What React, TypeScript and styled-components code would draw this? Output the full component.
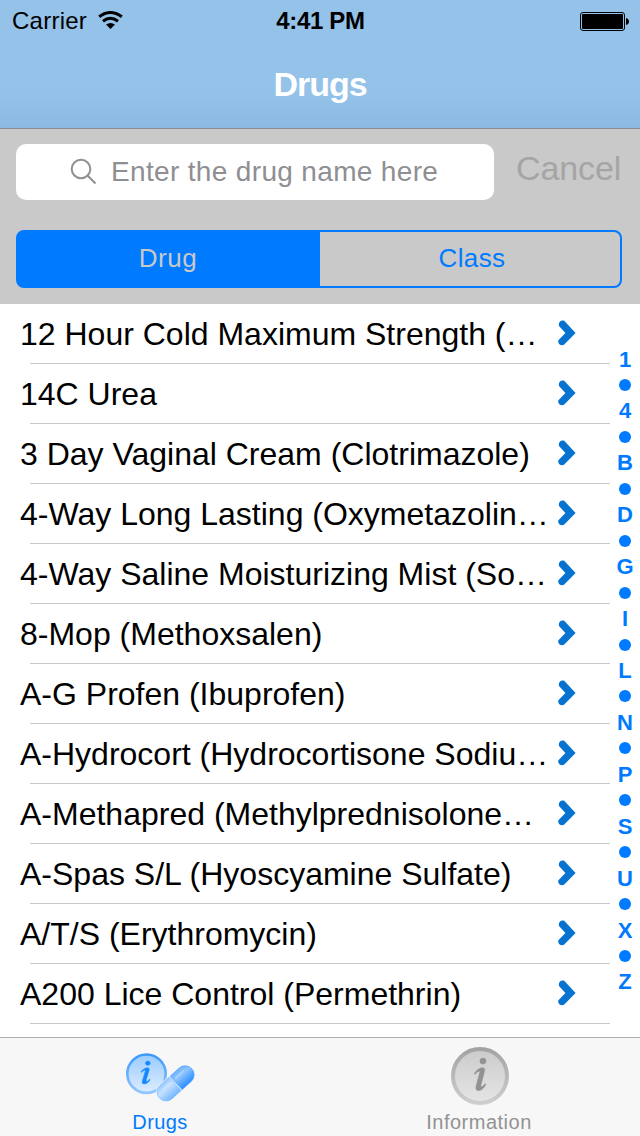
import React from 'react';
import styled, { createGlobalStyle } from 'styled-components';

const GlobalStyle = createGlobalStyle`
  * { box-sizing: border-box; }
  body { margin: 0; background: #fff; font-family: "Liberation Sans", Arial, sans-serif; }
`;

const Screen = styled.div`
  width: 640px;
  height: 1136px;
  display: flex;
  flex-direction: column;
  overflow: hidden;
  background: #fff;
`;

const Header = styled.header`
  height: 129px;
  flex: none;
  background: linear-gradient(#94c2e9 0 72%, #8bb9e1 100%);
  border-bottom: 1px solid #868b91;
`;

const StatusBar = styled.div`
  height: 40px;
  display: grid;
  grid-template-columns: 1fr auto 1fr;
  align-items: center;
  padding: 2px 11px 0 12px;
  color: #000;
`;

const Carrier = styled.div`
  display: flex;
  align-items: center;
  gap: 11px;
  font-size: 24px;
  letter-spacing: 0.25px;
  line-height: 38px;
  svg { position: relative; top: -1px; }
`;

const Clock = styled.div`
  font-size: 24px;
  font-weight: 700;
  letter-spacing: -0.35px;
  line-height: 38px;
`;

const BatteryIcon = styled.svg`
  justify-self: end;
`;

const Title = styled.h1`
  margin: 0;
  height: 88px;
  line-height: 89px;
  text-align: center;
  color: #fff;
  font-size: 34px;
  font-weight: 700;
  letter-spacing: -1px;
`;

const SearchArea = styled.section`
  height: 175px;
  flex: none;
  background: #c9c9c9;
  padding: 15px 18px 0 16px;
`;

const SearchRow = styled.div`
  display: flex;
  height: 56px;
`;

const SearchField = styled.div`
  width: 478px;
  height: 56px;
  border-radius: 10px;
  background: #fff;
  display: flex;
  align-items: center;
  padding-left: 54px;
  gap: 13px;
  color: #8e8e93;
  font-size: 28px;
  letter-spacing: 0.34px;
`;

const CancelButton = styled.div`
  margin-left: 22px;
  line-height: 49px;
  font-size: 34px;
  letter-spacing: -0.1px;
  white-space: nowrap;
  color: #a5a5a5;
`;

const Segments = styled.div`
  margin-top: 30px;
  width: 606px;
  height: 58px;
  display: flex;
  border: 2px solid #007aff;
  border-radius: 8px;
  background: linear-gradient(90deg, #007aff 304px, transparent 304px) border-box;
`;

const Segment = styled.div<{ $active?: boolean }>`
  width: ${p => (p.$active ? 300 : 302)}px;
  line-height: 53px;
  text-align: center;
  font-size: 26px;
  letter-spacing: ${p => (p.$active ? '0.5px' : '0.4px')};
  padding-left: ${p => (p.$active ? 0 : 6)}px;
  color: ${p => (p.$active ? '#c9c9c9' : '#007aff')};
`;

const Content = styled.main`
  flex: 1;
  display: flex;
`;

const List = styled.div`
  width: 610px;
`;

const Row = styled.div`
  height: 60px;
  display: flex;
  align-items: center;
  justify-content: space-between;
  padding: 0 34px 2px 20px;
  background: linear-gradient(#c8c7cc, #c8c7cc) 30px 59px / 580px 1px no-repeat;
`;

const DrugName = styled.span`
  font-size: 32px;
  line-height: 62px;
  padding-top: 2px;
  white-space: nowrap;
  color: #000;
`;

const IndexBar = styled.nav`
  width: 30px;
  padding-top: 42.6px;
  display: flex;
  flex-direction: column;
  align-items: center;
`;

const IndexItem = styled.div`
  height: 25.96px;
  line-height: 26px;
  display: flex;
  align-items: center;
  font-size: 22px;
  font-weight: 700;
  color: #007aff;
`;

const Dot = styled.i`
  width: 12px;
  height: 12px;
  margin-bottom: 1px;
  border-radius: 50%;
  background: #007aff;
`;

const TabBar = styled.footer`
  height: 99px;
  flex: none;
  display: flex;
  background: #f7f7f7;
  border-top: 1px solid #acacac;
`;

const Tab = styled.div<{ $active?: boolean }>`
  width: 320px;
  padding-top: 4px;
  display: flex;
  flex-direction: column;
  align-items: center;
  color: ${p => (p.$active ? '#007aff' : '#929292')};
  font-size: 20px;
  letter-spacing: ${p => (p.$active ? '0.4px' : '0.5px')};
  line-height: 24px;
  svg { display: block; height: 68px; }
`;

const TabLabel = styled.span<{ $active?: boolean }>`
  padding-right: ${p => (p.$active ? 0 : 2)}px;
`;

const drugs = [
  '12 Hour Cold Maximum Strength (…',
  '14C Urea',
  '3 Day Vaginal Cream (Clotrimazole)',
  '4-Way Long Lasting (Oxymetazolin…',
  '4-Way Saline Moisturizing Mist (So…',
  '8-Mop (Methoxsalen)',
  'A-G Profen (Ibuprofen)',
  'A-Hydrocort (Hydrocortisone Sodiu…',
  'A-Methapred (Methylprednisolone…',
  'A-Spas S/L (Hyoscyamine Sulfate)',
  'A/T/S (Erythromycin)',
  'A200 Lice Control (Permethrin)',
];

const letters = ['1', '4', 'B', 'D', 'G', 'I', 'L', 'N', 'P', 'S', 'U', 'X', 'Z'];

const Chevron = () => (
  <svg width="18" height="26" viewBox="0 0 18 26">
    <path d="M1 6C.2 2.6 2.4-.4 6.2.8L17.6 12.9 6 24.8C2.6 26.2-.6 23.6.4 20.2L7.4 13Z" fill="#0673d1" />
  </svg>
);

const Wifi = () => (
  <svg width="25" height="18" viewBox="0 0 25 18">
    <g fill="none" stroke="#000" strokeWidth="3">
      <path d="M1.2 5.8Q12.4-2.8 23.8 5.8" />
      <path d="M5 10.2Q12.4 4.4 20 10.2" />
    </g>
    <path d="M8 13.6Q12.4 10.2 17 13.6L12.5 18Z" />
  </svg>
);

const InfoGlyph = ({ color }: { color: string }) => (
  <g fill={color} stroke={color} strokeWidth=".5">
    <circle cx="8.6" cy="3" r="3" />
    <path d="M0 15.2C2.5 11.4 5.5 9.5 8.2 9.5c2 0 2.5 1.4 1.9 3.7L6.8 25.8c-.4 1.5-.3 2.4.3 2.4.9 0 2.1-1.2 3.4-3l1 .7c-2.3 4-4.8 6.1-7.3 6.1-2.3 0-3.1-1.6-2.3-4.7l3.4-12.6c.3-1.1.2-1.8-.4-1.8-1 0-2.5 1.2-3.9 3z" />
  </g>
);

const DrugsIcon = () => (
  <svg width="70" height="68" viewBox="125 1042 70 68">
    <defs>
      <linearGradient id="disc" x1="0" y1="0" x2="0" y2="1">
        <stop offset="0" stopColor="#9acbff" /><stop offset="1" stopColor="#dcedff" />
      </linearGradient>
      <linearGradient id="rim" x1="0" y1="0" x2="0" y2="1">
        <stop offset="0" stopColor="#3b99ff" /><stop offset="1" stopColor="#91c6ff" />
      </linearGradient>
      <linearGradient id="capA" x1="0" y1="0" x2="0" y2="1">
        <stop offset="0" stopColor="#94c8ff" /><stop offset=".35" stopColor="#c6e1ff" /><stop offset="1" stopColor="#73b6ff" />
      </linearGradient>
      <linearGradient id="capB" x1="0" y1="0" x2="0" y2="1">
        <stop offset="0" stopColor="#6eb3ff" /><stop offset=".35" stopColor="#8fc5ff" /><stop offset="1" stopColor="#2b8fff" />
      </linearGradient>
    </defs>
    <circle cx="146.5" cy="1073.7" r="19.2" fill="url(#disc)" stroke="url(#rim)" strokeWidth="2.6" />
    <g transform="translate(140.8 1061) scale(.82 .72)"><InfoGlyph color="#1688ff" /></g>
    <g transform="translate(175.6 1083.4) rotate(-42)">
      <rect x="-23" y="-10" width="46" height="20" rx="10" fill="#f7f7f7" />
      <path d="M-.7-9H-12.8a9 9 0 0 0 0 18H-.7Z" fill="url(#capA)" stroke="#7dbbff" strokeWidth=".7" />
      <path d="M.7-9H12.8a9 9 0 0 1 0 18H.7Z" fill="url(#capB)" stroke="#4ca1ff" strokeWidth=".7" />
      <path d="M-13-4H-4M4-4h10" stroke="#e1f0ff" strokeWidth="2" strokeLinecap="round" opacity=".35" />
    </g>
  </svg>
);

const InfoIcon = () => (
  <svg width="60" height="68" viewBox="450 1042 60 68">
    <defs>
      <linearGradient id="greyDisc" x1="0" y1="0" x2="0" y2="1">
        <stop offset="0" stopColor="#cbcbcb" /><stop offset="1" stopColor="#e5e5e5" />
      </linearGradient>
      <linearGradient id="greyRim" x1="0" y1="0" x2="0" y2="1">
        <stop offset="0" stopColor="#a3a3a3" /><stop offset="1" stopColor="#cecece" />
      </linearGradient>
    </defs>
    <circle cx="480" cy="1076" r="27" fill="url(#greyDisc)" stroke="url(#greyRim)" strokeWidth="4" />
    <g transform="translate(474.2 1058) scale(1.02)"><InfoGlyph color="#929292" /></g>
  </svg>
);

export default function App() {
  return (
    <Screen>
      <GlobalStyle />
      <Header>
        <StatusBar>
          <Carrier>Carrier <Wifi /></Carrier>
          <Clock>4:41 PM</Clock>
          <BatteryIcon width="49" height="19" viewBox="0 0 49 19">
            <rect x=".5" y=".5" width="44" height="18" rx="2.5" fill="none" stroke="#000" />
            <rect x="2" y="2" width="41" height="15" rx="1" />
            <path d="M46 6q3 1 3 3.5t-3 3.5z" />
          </BatteryIcon>
        </StatusBar>
        <Title>Drugs</Title>
      </Header>
      <SearchArea>
        <SearchRow>
          <SearchField>
            <svg width="28" height="28" viewBox="0 0 28 28" fill="none" stroke="#8e8e93" strokeWidth="2">
              <circle cx="11" cy="11" r="9.3" />
              <path d="M17.5 17.5 25.5 25.5" />
            </svg>
            <span>Enter the drug name here</span>
          </SearchField>
          <CancelButton>Cancel</CancelButton>
        </SearchRow>
        <Segments>
          <Segment $active>Drug</Segment>
          <Segment>Class</Segment>
        </Segments>
      </SearchArea>
      <Content>
        <List>
          {drugs.map(name => (
            <Row key={name}>
              <DrugName>{name}</DrugName>
              <Chevron />
            </Row>
          ))}
        </List>
        <IndexBar>
          {letters.map((letter, i) => (
            <React.Fragment key={letter}>
              {i > 0 && <IndexItem><Dot /></IndexItem>}
              <IndexItem>{letter}</IndexItem>
            </React.Fragment>
          ))}
        </IndexBar>
      </Content>
      <TabBar>
        <Tab $active><DrugsIcon /><TabLabel $active>Drugs</TabLabel></Tab>
        <Tab><InfoIcon /><TabLabel>Information</TabLabel></Tab>
      </TabBar>
    </Screen>
  );
}
